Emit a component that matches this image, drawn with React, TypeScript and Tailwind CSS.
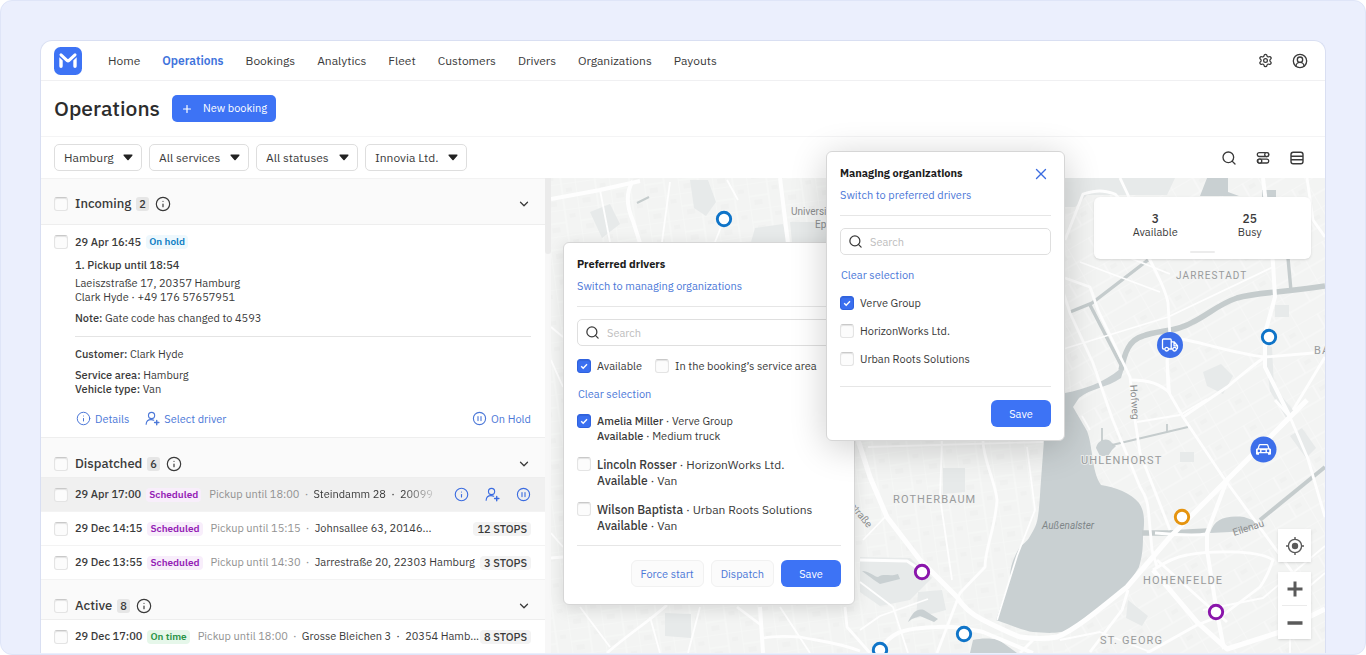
import type { ReactNode } from "react"
import { ChevronDown, CircleUserRound, Info, Plus, Search, Settings, X } from "lucide-react"

const navItems = [
  "Home",
  "Operations",
  "Bookings",
  "Analytics",
  "Fleet",
  "Customers",
  "Drivers",
  "Organizations",
  "Payouts",
]

const filters = [
  { label: "Service area", value: "Hamburg", width: "w-[88px]" },
  { label: "Service", value: "All services", width: "w-[100px]" },
  { label: "Status", value: "All statuses", width: "w-[102px]" },
  { label: "Organization", value: "Innovia Ltd.", width: "w-[102px]" },
]

const tagStyles = {
  "On hold": "bg-[#eef8fd] text-[#0f7fc4]",
  Scheduled: "bg-[#f8eefb] text-[#9421b5]",
  "On time": "bg-[#e6f7ea] text-[#2a9447]",
}

type Tag = keyof typeof tagStyles

const drivers = [
  { name: "Amelia Miller", org: "Verve Group", vehicle: "Medium truck", checked: true },
  { name: "Lincoln Rosser", org: "HorizonWorks Ltd.", vehicle: "Van", checked: false },
  { name: "Wilson Baptista", org: "Urban Roots Solutions", vehicle: "Van", checked: false },
]

const organizations = [
  { name: "Verve Group", checked: true },
  { name: "HorizonWorks Ltd.", checked: false },
  { name: "Urban Roots Solutions", checked: false },
]

const Logo = () => (
  <svg viewBox="0 0 28 28" className="size-7" aria-hidden="true">
    <rect width="28" height="28" rx="6.5" fill="#3d73f5" />
    <path
      d="M7 7.800l6.200 5.900a1.200 1.200 0 0 0 1.600 0L21 7.800"
      fill="none"
      stroke="#fff"
      strokeWidth="3"
      strokeLinecap="round"
    />
    <path
      d="M5.300 10.200L8.700 13.400V19.200a1.700 1.700 0 0 1-3.400 0zM22.700 10.200L19.300 13.400V19.200a1.700 1.700 0 0 0 3.400 0z"
      fill="#fff"
    />
  </svg>
)

const UserPlusIcon = () => (
  <svg
    viewBox="0 0 16 16"
    className="size-[15px]"
    fill="none"
    stroke="currentColor"
    strokeWidth="1.2"
    strokeLinecap="round"
    aria-hidden="true"
  >
    <circle cx="7" cy="4.8" r="3.3" />
    <path d="M1.2 14.2c.2-3.3 2.4-5 5.2-5 1.200 0 2.100.2 2.900.7" />
    <path d="M12.500 10v4.600M10.200 12.300h4.600" strokeWidth="1.500" />
  </svg>
)

const HoldIcon = () => (
  <svg
    viewBox="0 0 16 16"
    className="size-[15px]"
    fill="none"
    stroke="currentColor"
    strokeWidth="1.2"
    strokeLinecap="round"
    aria-hidden="true"
  >
    <circle cx="8" cy="8" r="6.500" />
    <path d="M6.400 5.800v4.400M9.600 5.800v4.400" />
  </svg>
)

const TogglesIcon = () => (
  <svg
    viewBox="0 0 16 16"
    className="size-4"
    fill="none"
    stroke="currentColor"
    strokeWidth="1.3"
    aria-hidden="true"
  >
    <rect x="2.300" y="2.700" width="11.400" height="3.800" rx="1.900" />
    <circle cx="11.700" cy="4.600" r="2" fill="#fff" />
    <rect x="2.300" y="9.200" width="11.400" height="3.800" rx="1.900" />
    <circle cx="4.800" cy="11.100" r="2" fill="#fff" />
  </svg>
)

const TableIcon = () => (
  <svg
    viewBox="0 0 16 16"
    className="size-4"
    fill="none"
    stroke="currentColor"
    strokeWidth="1.4"
    aria-hidden="true"
  >
    <rect x="2" y="2.300" width="12" height="11.400" rx="2.200" />
    <path d="M2 6.200h12M2 9.800h12" />
  </svg>
)

const Checkbox = ({ id, label, checked = false }: { id: string; label?: string; checked?: boolean }) => (
  <span className="grid size-[14px] shrink-0 place-items-center">
    <input
      id={id}
      type="checkbox"
      aria-label={label}
      defaultChecked={checked}
      className="peer col-start-1 row-start-1 size-[14px] appearance-none rounded-[3px] border border-[#e4e4e4] border-t-[#c9c9c9] bg-[#fcfcfc] shadow-[inset_0_1px_1px_rgba(0,0,0,0.1)] checked:border-[#2f62df] checked:bg-[#3a6ff0]"
    />
    <svg
      viewBox="0 0 14 14"
      className="pointer-events-none col-start-1 row-start-1 size-[14px] opacity-0 peer-checked:opacity-100"
      fill="none"
      stroke="#fff"
      strokeWidth="1.4"
      aria-hidden="true"
    >
      <path d="M4.200 7.200l2 2 3.800-4" />
    </svg>
  </span>
)

const StatusTag = ({ tag }: { tag: Tag }) => (
  <span className={`shrink-0 rounded px-[3px] text-[10px] leading-[14px] font-semibold ${tagStyles[tag]}`}>
    {tag}
  </span>
)

const SectionHeader = ({
  title,
  count,
  className,
}: {
  title: string
  count: number
  className: string
}) => (
  <div className={`flex shrink-0 items-center border-b border-[#eeeeee] bg-[#fafafa] pr-[14px] pl-[13px] ${className}`}>
    <Checkbox id={`section-${title}`} label={`Select all ${title}`} />
    <h2 className="ml-[7px] text-[13px] font-medium">{title}</h2>
    <span className="ml-[5px] rounded-[3px] bg-[#e6e6e6] px-[3px] text-[11px] leading-[14px] font-medium">
      {count}
    </span>
    <Info className="ml-[6px] size-4" strokeWidth={1.8} />
    <button aria-label={`Collapse ${title}`} className="ml-auto">
      <ChevronDown className="size-[14px]" strokeWidth={2.2} />
    </button>
  </div>
)

const BookingRow = ({
  date,
  tag,
  pickup,
  address,
  stops,
}: {
  date: string
  tag: Tag
  pickup: string
  address: string
  stops?: string
}) => (
  <div
    className={`flex h-[34px] shrink-0 items-center border-b border-[#f3f3f3] pr-[14px] pl-[13px] text-[11px] ${
      stops ? "" : "bg-[#f0f0f0]"
    }`}
  >
    <Checkbox id={`booking-${date}`} label={`Select booking ${date}`} />
    <span className="ml-[7px] mr-[5px] shrink-0 font-medium">{date}</span>
    <StatusTag tag={tag} />
    <span className="ml-2 shrink-0 whitespace-pre text-[#929292]">{pickup}  ·  </span>
    {stops ? (
      <>
        <span className="shrink-0 whitespace-pre">{address}</span>
        <span className="ml-auto shrink-0 rounded bg-[#f3f3f3] px-1 leading-[14px] font-medium">
          {stops}
        </span>
      </>
    ) : (
      <>
        <span className="shrink-0 whitespace-pre [mask-image:linear-gradient(to_right,black_75%,rgba(0,0,0,0.2))]">
          {address}
        </span>
        <span className="ml-auto flex gap-4 text-[#3b6ce0]">
          <button aria-label="Details">
            <Info className="size-[15px]" strokeWidth={1.8} />
          </button>
          <button aria-label="Select driver">
            <UserPlusIcon />
          </button>
          <button aria-label="Put on hold">
            <HoldIcon />
          </button>
        </span>
      </>
    )}
  </div>
)

const IncomingBooking = () => (
  <article className="shrink-0 border-b border-[#eeeeee] pt-[10px] pr-[14px] pb-[11px] pl-[13px] text-[11px] leading-[14px]">
    <div className="flex items-center">
      <Checkbox id="booking-incoming" label="Select booking 29 Apr 16:45" />
      <span className="ml-[7px] mr-[5px] font-medium">29 Apr 16:45</span>
      <StatusTag tag="On hold" />
    </div>
    <div className="pl-[21px]">
      <p className="mt-[9px] font-medium">1. Pickup until 18:54</p>
      <p className="mt-1">
        Laeiszstraße 17, 20357 Hamburg
        <br />
        Clark Hyde · +49 176 57657951
      </p>
      <p className="mt-[7px]">
        <b className="font-medium">Note:</b> Gate code has changed to 4593
      </p>
      <hr className="mt-[11px] border-[#e4e4e4]" />
      <p className="mt-[10px]">
        <b className="font-medium">Customer:</b> Clark Hyde
      </p>
      <p className="mt-[7px]">
        <b className="font-medium">Service area:</b> Hamburg
        <br />
        <b className="font-medium">Vehicle type:</b> Van
      </p>
      <div className="mt-[15px] flex items-center gap-4 text-[#4c78d8]">
        <button className="ml-[1px] flex items-center gap-1">
          <Info className="size-[15px]" strokeWidth={1.6} />
          Details
        </button>
        <button className="flex items-center gap-1">
          <UserPlusIcon />
          Select driver
        </button>
        <button className="ml-auto flex items-center gap-1">
          <HoldIcon />
          On Hold
        </button>
      </div>
    </div>
  </article>
)

const Panel = ({
  id,
  title,
  switchLabel,
  closable,
  className,
  children,
}: {
  id: string
  title: string
  switchLabel: string
  closable?: boolean
  className: string
  children: ReactNode
}) => (
  <section
    className={`absolute rounded-md border border-[#d6d6d6] bg-white px-[13px] pt-[13px] text-[11px] leading-4 ${className}`}
  >
    <div className="flex items-center justify-between">
      <h3 className="font-bold text-[#1c1c1c]">{title}</h3>
      {closable && (
        <button aria-label="Close" className="mr-[1px] h-4 text-[#3b6ce0]">
          <X className="size-[18px]" strokeWidth={1.8} />
        </button>
      )}
    </div>
    <a href="#switch" className="mt-[6px] block text-[#4c78d8]">
      {switchLabel}
    </a>
    <hr className="mt-3 border-[#e6e6e6]" />
    <label
      htmlFor={id}
      className="mt-3 flex h-[27px] items-center gap-[7px] rounded-[5px] border border-[#dfdfdf] px-[7px]"
    >
      <Search className="size-[15px]" strokeWidth={2} />
      <input
        id={id}
        type="search"
        aria-label="Search"
        placeholder="Search"
        className="min-w-0 flex-1 outline-none placeholder:text-[#bdbdbd]"
      />
    </label>
    {children}
  </section>
)

const ClearLink = () => (
  <a href="#clear" className="mt-3 block w-fit px-[1px] text-[#4c78d8]">
    Clear selection
  </a>
)

const SaveButton = () => (
  <button className="h-[27px] w-[60px] rounded-md bg-[#3d73f5] text-white">Save</button>
)

const Ring = ({ x, y, color }: { x: number; y: number; color: string }) => (
  <circle cx={x} cy={y} r="6.700" fill="#fff" stroke={color} strokeWidth="2.900" />
)

const CityMap = () => (
  <svg
    viewBox="551 178 774 475"
    preserveAspectRatio="xMinYMin slice"
    className="absolute inset-0 size-full"
    fontFamily="Roboto, sans-serif"
    role="img"
    aria-label="Map of Hamburg"
  >
    <defs>
      <pattern id="blocks" width="34" height="26" patternUnits="userSpaceOnUse" patternTransform="rotate(-8)">
        <path d="M0 0h34M0 13h20M0 0v26M20 0v26" stroke="#f8f9f8" strokeWidth="1.100" fill="none" />
        <path d="M24 5h6v4h-6zM5 17h8v5h-8z" fill="#f0f1f0" />
      </pattern>
      <pattern id="blocks-east" width="40" height="30" patternUnits="userSpaceOnUse" patternTransform="rotate(-30)">
        <path d="M0 0h40M0 16h40M0 0v30M24 0v16" stroke="#f9faf9" strokeWidth="1.100" fill="none" />
        <path d="M28 5h7v4h-7z" fill="#f0f1f0" />
      </pattern>
    </defs>
    <rect x="551" y="178" width="774" height="475" fill="#f3f4f3" />
    <path d="M551 178h520v475H551z" fill="url(#blocks)" />
    <path d="M1065 178h260v475h-260z" fill="url(#blocks-east)" />

    <g fill="#e7eaea">
      <path d="M860 557l50 1 22 20-22 22-30 6-20-14z" />
      <path d="M690 180h18l8 22-10 14-12-8zM755 228l28-4 4 18h-36zM590 212l20-8 10 20-18 14zM790 222h36v20h-34z" />
      <path d="M665 613l26 1v24l-26-2zM943 468l22 0v24l-22 2zM1065 178h110l-8 17h-80l-12 12h-10z" />
      <path d="M1203 372l18-8 12 12-10 18-16-8zM1264 345l8 2 2 40 20 24-6 10-18-30z" />
      <path d="M1275 305h14v12h-14zM1180 452h14v10h-14zM1128 600l20 16-6 10-16-8zM1290 436l12-8 14 20-10 10z" />
      <path d="M918 592l24-2 4 20-30 8z" />
    </g>

    <g fill="#c9d0d2">
      <path d="M1065 393c20-4 38-10 55-24l4-1-3 10c-14 10-30 10-42 20l-6 9 14 24c3 8 4 16 6 30 2 12 4 18 8 24 14 2 30 8 38 18 7 10 5 22 4 34 0 12-1 20-4 30-6 10-12 18-20 26-12 10-20 16-33 24-10 8-18 15-26 15-12 2-18 0-27 0-8-1-20-6-37-12l14-42c0-12 4-20 7-26 4-8 8-8 12-14 6-10 8-14 9-22 2-14 2-24 3-36l3-40v-47z" />
      <path d="M1200 196l7-18h21v14l11 4zM1262 190h14v8h-14z" />
      <path d="M1210 533c4-14 16-18 34-16l14 5-10 8-18 2zM1096 448c2-9 12-11 16-5l4 3-4 4-4 6h-8z" />
      <path d="M973 640c8-2 18-2 26 0l18 13h-47zM862 571c8 0 12 6 16 6 6-4 12 0 20-3l2 5-8 2-12 3-6-4zM908 622c4-8 8-14 16-12l14 9-4 3-14-6-8 3z" />
    </g>
    <g fill="none" stroke="#c5cccd">
      <path d="M1121 370c4-18 8-30 22-34 16-6 34-4 50-14 16-8 26-18 44-24 20-6 44-5 88-12" strokeWidth="5.500" />
      <path d="M1070 312l22-9 56-43M1090 305l31 60M1288 258l3 33" strokeWidth="3.400" />
      <path d="M1112 445l76-18M1102 428v13M1167 424v8" strokeWidth="1.800" />
      <path d="M1260 520l65-53" strokeWidth="4" />
      <path d="M1142 533h26l40-2" strokeWidth="5.500" />
      <path d="M637 203l12-6" strokeWidth="2" />
    </g>

    <g fill="none" stroke="#fefefe" strokeLinejoin="round">
      <g strokeWidth="1.800">
        <path d="M942 440l-2 57 12 83M1027 447l8 63-18 46-20 64M868 447l175-5M860 582l33 25 15 46M860 630l20-14 48-17M863 540l24-25" />
        <path d="M650 617l10 36M580 607l30 40M700 607l-12 46M780 607l30 46M551 533l12 14M551 360l12 27M551 327l12 10" />
        <path d="M727 180l11 20M715 242l8-20M600 190l10 52M670 182l-8 60M1137 422l43-7 27-16M1060 350l108-33 105-50M1090 430l-8-14" />
        <path d="M1080 262l80 30M1110 250l60 24M1170 393l-4-56M1203 610l60-12 62-52M1060 640l40-8 50 20M1290 653v-50l35-30" />
      </g>
      <g strokeWidth="2.800">
        <path d="M983 440c0 20 12 40 14 60-2 30-12 48-12 67l-25 26-23 60" />
        <path d="M1060 282l10 31 23 50 19 55 28 69c8 12 8 20 9 30l3 33 5 17" />
        <path d="M1065 278l25 9 8 23 32 67 5 43 5 33 30 77" />
        <path d="M1065 240l18-46c14-4 20-4 32 0l20 22M1128 195l-8-17M1128 195l22 65c8 16 16 30 18 43l2 34-3 24 1 30 15 26 40 60 70 96" />
        <path d="M1130 380c20 0 30 4 40 13M1170 337c30 4 60 16 95 20l60-5M1265 357c-20 14-30 24-38 30l-44 30" />
        <path d="M1153 570c12-8 22-13 34-15 20-4 70-6 86 5-4 12-8 20-13 27l-37 28-26 10-50 28" />
        <path d="M1207 534c-14 2-40 0-52-1M1275 400l15 17 18 42 17 58M1307 178l6 42 12 17M1325 357l-32 53" />
        <path d="M551 558l12-1M607 653c20-18 40-30 60-48M737 607l24 18M763 638c10-2 22-2 37-1 20 4 40 6 60 14M845 607l2 20 23 26M1157 560l50 45 20 17" />
        <path d="M860 560l47 1 18 12M1128 590l-6 20-32 42M1033 640l-13 13" />
      </g>
      <g strokeWidth="4">
        <path d="M551 199l49-9 40-9M633 181c-8 12-6 26 0 40l7 22M760 607l3 46M780 178l8 66" />
        <path d="M1263 178l10 85 2 34-10 36v34l25 50-10 10M1227 480l-20 53v17l10 63 7 36" />
        <path d="M880 650c10-16 20-22 57-23 20-1 30 2 46 5l50 21" />
      </g>
      <path d="M858 440l12 37 17 40 33 43 37 37c6 10 16 18 26 23 12 6 24 12 37 17 14 2 26 2 37 0 20-8 50-34 70-50l43-50 57-57 80-80M1153 570l44 52 30 27 50-16 48-24" strokeWidth="5" />
    </g>

    <g
      fill="#999b9c"
      fontSize="11"
      className="tracking-widest"
      stroke="#f3f4f3"
      strokeWidth="2"
      strokeOpacity="0.8"
      paintOrder="stroke"
    >
      <text x="1176" y="279" fontSize="10">JARRESTADT</text>
      <text x="1081" y="464">UHLENHORST</text>
      <text x="893" y="503">ROTHERBAUM</text>
      <text x="1143" y="584">HOHENFELDE</text>
      <text x="1100" y="644">ST. GEORG</text>
      <text x="1314" y="354">BA</text>
    </g>
    <g fill="#8b8d8e" fontSize="10">
      <text x="791" y="215">Universitätsklinikum</text>
      <text x="815" y="228">Eppendorf</text>
      <text x="1042" y="529" fontStyle="italic" fill="#7f8689">
        Außenalster
      </text>
      <text transform="translate(1130 385) rotate(86)">Hofweg</text>
      <text transform="translate(1234 536) rotate(-18)">Eilenau</text>
      <text transform="translate(828 481) rotate(50)">Bundesstraße</text>
    </g>

    <Ring x={724} y={219} color="#0f74c8" />
    <Ring x={1269} y={337} color="#0f74c8" />
    <Ring x={964} y={634} color="#0f74c8" />
    <Ring x={880} y={650} color="#0f74c8" />
    <Ring x={922} y={572} color="#8a16ab" />
    <Ring x={1216} y={612} color="#8a16ab" />
    <Ring x={1182} y={517} color="#e5940f" />

    <g transform="translate(1170 345)" fill="none" stroke="#fff" strokeWidth="1.300" strokeLinejoin="round">
      <circle r="13" fill="#3d6fea" stroke="none" />
      <path d="M-5.400 4H-6.500a1 1 0 0 1-1-1V-5a1 1 0 0 1 1-1H.200a1 1 0 0 1 1 1V4H-1.200M1.200-3.200H4L7.500.800V3a1 1 0 0 1-1 1M1.200 4H2.600M4-3V.900H7.300" />
      <circle cx="-3.300" cy="4.200" r="1.800" />
      <circle cx="4.600" cy="4.200" r="1.800" />
    </g>
    <g transform="translate(1263.500 449.500)" fill="none" stroke="#fff" strokeWidth="1.200" strokeLinejoin="round">
      <circle r="13" fill="#3d6fea" stroke="none" />
      <path d="M-5.500-.500L-4.300-4.200a1 1 0 0 1 1-.7H3.300a1 1 0 0 1 1 .7L5.500-.500" />
      <path d="M-7.500-.200C-7-1-6-1.200-5-1.200H5C6-1.200 7-1 7.500-.200V4.300a1 1 0 0 1-1 1H4.500V3.800H-4.500V5.300h-2a1 1 0 0 1-1-1z" fill="#fff" stroke="none" />
      <circle cx="-4.600" cy="1.400" r="1.300" fill="#3d6fea" stroke="none" />
      <circle cx="4.600" cy="1.400" r="1.300" fill="#3d6fea" stroke="none" />
      <path d="M-2 1.600h4" stroke="#3d6fea" strokeWidth="1.800" />
    </g>
  </svg>
)

const MapControls = () => (
  <div className="absolute right-[14px] bottom-[14px] flex w-[33px] flex-col gap-[10px] text-[#5a5a5a]">
    <button aria-label="My location" className="grid h-[33px] place-items-center bg-white shadow">
      <svg viewBox="0 0 18 18" className="size-[18px]" fill="none" stroke="currentColor" strokeWidth="1.400" aria-hidden="true">
        <circle cx="9" cy="9" r="6.600" />
        <circle cx="9" cy="9" r="3.200" fill="currentColor" stroke="none" />
        <path d="M9 0v3M9 15v3M0 9h3M15 9h3" />
      </svg>
    </button>
    <div className="flex flex-col bg-white px-1 shadow">
      <button aria-label="Zoom in" className="grid h-[33px] place-items-center">
        <svg viewBox="0 0 16 16" className="size-4" aria-hidden="true">
          <path d="M8 .500v15M.500 8h15" stroke="currentColor" strokeWidth="3" />
        </svg>
      </button>
      <button aria-label="Zoom out" className="grid h-[34px] place-items-center border-t border-[#ebebeb]">
        <svg viewBox="0 0 16 4" className="w-4" aria-hidden="true">
          <path d="M.500 2h15" stroke="currentColor" strokeWidth="3.400" />
        </svg>
      </button>
    </div>
  </div>
)

const FleetStats = () => (
  <div className="absolute top-[19px] right-[14px] w-[217px] rounded-md bg-white px-6 pt-[15px] pb-[6px] shadow-sm">
    <div className="grid grid-cols-2 pr-1 text-center text-[11px] leading-[13px]">
      <div className="pr-2">
        <p className="text-xs leading-[14px] font-medium">3</p>
        <p>Available</p>
      </div>
      <div className="pl-4">
        <p className="text-xs leading-[14px] font-medium">25</p>
        <p>Busy</p>
      </div>
    </div>
    <div className="mx-auto mt-3 h-[2px] w-[25px] rounded bg-[#ececec]" />
  </div>
)

export default function App() {
  return (
    <div className="h-screen bg-white font-['IBM_Plex_Sans',Roboto,sans-serif] text-[#3a3a3a]">
      <div className="flex h-full flex-col overflow-hidden rounded-xl border border-[#dfe5f8] bg-[#ebeffd] px-[39px] pt-[39px] pb-[1px]">
        <div className="flex min-h-0 flex-1 flex-col rounded-t-xl border border-b-0 border-[#d9dff2] bg-white">
          <header className="flex h-10 shrink-0 items-center border-b border-[#f0f0f2] px-[13px] pr-[17px]">
            <Logo />
            <nav className="ml-[26px] flex gap-[22px] text-xs">
              {navItems.map((item) => (
                <a
                  key={item}
                  href={`#${item.toLowerCase()}`}
                  className={item === "Operations" ? "font-semibold text-[#3f74dc]" : ""}
                >
                  {item}
                </a>
              ))}
            </nav>
            <div className="ml-auto flex items-center gap-[19px]">
              <button aria-label="Settings">
                <Settings className="size-[15px]" strokeWidth={2} />
              </button>
              <button aria-label="Account">
                <CircleUserRound className="size-4" strokeWidth={2} />
              </button>
            </div>
          </header>

          <div className="flex h-14 shrink-0 items-center gap-3 border-b border-[#f4f4f5] px-[13px]">
            <h1 className="text-[21px] font-medium text-[#2c2c2c]">Operations</h1>
            <button className="flex h-[27px] items-center gap-[10px] rounded-[5px] bg-[#3d73f5] px-[9px] text-[11px] text-white">
              <Plus className="size-3" strokeWidth={2.4} />
              New booking
            </button>
          </div>

          <div className="flex h-[41px] shrink-0 items-center gap-[7px] px-[13px]">
            {filters.map((filter) => (
              <div key={filter.value} className={`grid items-center ${filter.width}`}>
                <select
                  aria-label={filter.label}
                  className="col-start-1 row-start-1 h-[27px] w-full appearance-none rounded-[5px] border border-[#dedede] bg-white pl-[9px] text-xs"
                >
                  <option>{filter.value}</option>
                </select>
                <svg
                  viewBox="0 0 10 7"
                  className="pointer-events-none col-start-1 row-start-1 mr-[9px] w-[10px] justify-self-end"
                  aria-hidden="true"
                >
                  <path d="M1.200.5h7.600c.7 0 1 .7.500 1.200L5.600 5.900c-.3.400-.8.400-1.200 0L.7 1.700C.2 1.200.5.500 1.200.5z" fill="#222" />
                </svg>
              </div>
            ))}
            <div className="ml-auto mr-[7px] flex items-center gap-[18px]">
              <button aria-label="Search bookings">
                <Search className="size-4" strokeWidth={2} />
              </button>
              <button aria-label="Filter settings">
                <TogglesIcon />
              </button>
              <button aria-label="Table view">
                <TableIcon />
              </button>
            </div>
          </div>

          <main className="flex min-h-0 flex-1">
            <div className="flex w-[510px] shrink-0 overflow-hidden">
              <div className="flex min-w-0 flex-1 flex-col">
                <SectionHeader title="Incoming" count={2} className="h-[47px] border-t border-t-[#f2f2f2] pt-1" />
                <IncomingBooking />
                <SectionHeader title="Dispatched" count={6} className="h-10 pt-3" />
                <BookingRow
                  date="29 Apr 17:00"
                  tag="Scheduled"
                  pickup="Pickup until 18:00"
                  address="Steindamm 28  ·  20099"
                />
                <BookingRow
                  date="29 Dec 14:15"
                  tag="Scheduled"
                  pickup="Pickup until 15:15"
                  address="Johnsallee 63, 20146..."
                  stops="12 STOPS"
                />
                <BookingRow
                  date="29 Dec 13:55"
                  tag="Scheduled"
                  pickup="Pickup until 14:30"
                  address="Jarrestraße 20, 22303 Hamburg"
                  stops="3 STOPS"
                />
                <SectionHeader title="Active" count={8} className="h-10 pt-3" />
                <BookingRow
                  date="29 Dec 17:00"
                  tag="On time"
                  pickup="Pickup until 18:00"
                  address="Grosse Bleichen 3  ·  20354 Hamb..."
                  stops="8 STOPS"
                />
              </div>
              <div className="w-[6px] shrink-0 bg-[#f7f7f7]">
                <div className="h-[76px] rounded-b bg-[#ebebeb]" />
              </div>
            </div>

            <div className="relative min-w-0 flex-1">
              <CityMap />
              <FleetStats />
              <MapControls />

              <Panel
                id="driver-search"
                title="Preferred drivers"
                switchLabel="Switch to managing organizations"
                className="top-[64px] left-3 w-[292px] pb-[17px] shadow-[0_4px_16px_rgba(0,0,0,0.12)]"
              >
                <div className="mt-3 flex items-center">
                  <Checkbox id="available" checked />
                  <label htmlFor="available" className="ml-[6px]">
                    Available
                  </label>
                  <span className="w-[13px]" />
                  <Checkbox id="in-area" />
                  <label htmlFor="in-area" className="ml-[6px]">
                    In the booking’s service area
                  </label>
                </div>
                <ClearLink />
                <ul className="mt-3 flex flex-col gap-[13px]">
                  {drivers.map((driver, index) => (
                    <li
                      key={driver.name}
                      className={`flex gap-[6px] ${driver.checked ? "leading-[15px]" : "text-xs leading-4"}`}
                    >
                      <Checkbox id={`driver-${index}`} checked={driver.checked} />
                      <label htmlFor={`driver-${index}`}>
                        <b className="font-medium">{driver.name}</b> · {driver.org}
                        <br />
                        <b className="font-medium">Available</b> · {driver.vehicle}
                      </label>
                    </li>
                  ))}
                </ul>
                <hr className="mt-[11px] border-[#e6e6e6]" />
                <div className="mt-[14px] flex justify-end gap-[7px]">
                  <button className="h-[27px] rounded-md border border-[#f1f1f1] bg-[#fbfbfb] px-[9px] text-[#4c78d8]">
                    Force start
                  </button>
                  <button className="h-[27px] rounded-md border border-[#f1f1f1] bg-[#fbfbfb] px-[9px] text-[#4c78d8]">
                    Dispatch
                  </button>
                  <SaveButton />
                </div>
              </Panel>

              <Panel
                id="organization-search"
                title="Managing organizations"
                switchLabel="Switch to preferred drivers"
                closable
                className="-top-[27px] left-[275px] w-[239px] pb-[13px] shadow-[0_6px_36px_rgba(0,0,0,0.2)]"
              >
                <ClearLink />
                <ul className="mt-3 flex flex-col gap-3">
                  {organizations.map((organization, index) => (
                    <li key={organization.name} className="flex items-center gap-[6px]">
                      <Checkbox id={`organization-${index}`} checked={organization.checked} />
                      <label htmlFor={`organization-${index}`}>{organization.name}</label>
                    </li>
                  ))}
                </ul>
                <hr className="mt-[19px] border-[#e6e6e6]" />
                <div className="mt-[13px] flex justify-end">
                  <SaveButton />
                </div>
              </Panel>
            </div>
          </main>
        </div>
      </div>
    </div>
  )
}
